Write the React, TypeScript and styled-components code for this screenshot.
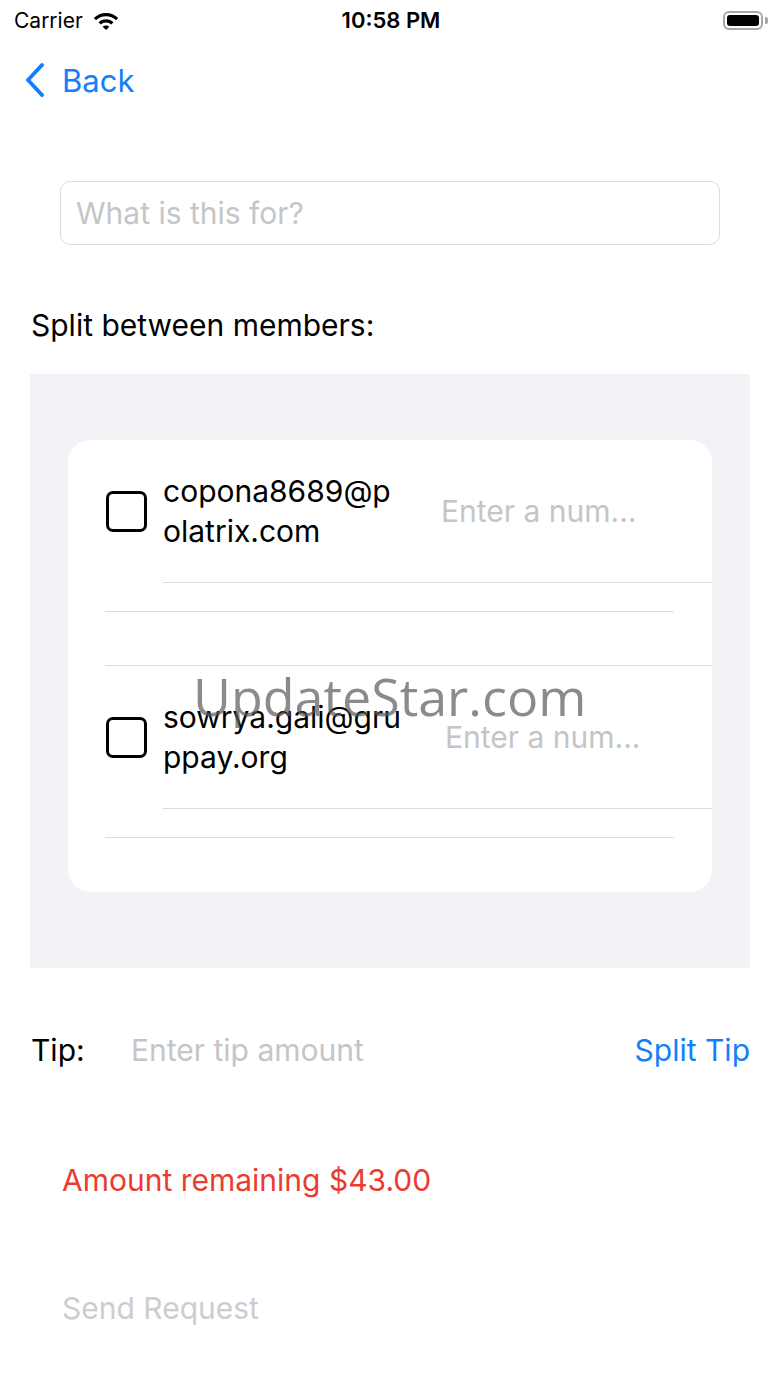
import styled, { createGlobalStyle } from 'styled-components';
import { ReactElement } from 'react';

const GlobalStyle = createGlobalStyle`
  html, body {
    margin: 0;
    padding: 0;
    background: #ffffff;
  }
  body {
    font-family: Inter, 'Liberation Sans', sans-serif;
    color: #000000;
  }
`;

const Screen = styled.div`
  position: relative;
  width: 780px;
  height: 1387px;
  overflow: hidden;
  background: #ffffff;
`;

const StatusBar = styled.div`
  display: grid;
  grid-template-columns: 1fr auto 1fr;
  align-items: center;
  height: 40px;
  padding: 0 12px 0 14px;
  font-size: 21px;
`;

const Carrier = styled.div`
  display: flex;
  align-items: center;
  gap: 9px;
`;

const Clock = styled.div`
  font-weight: 600;
  font-size: 22px;
`;

const Battery = styled.div`
  justify-self: end;
  display: flex;
  align-items: center;
  gap: 2px;
`;

const BatteryBody = styled.div`
  width: 40px;
  height: 19px;
  border: 2px solid #a8a8a8;
  border-radius: 6px;
  padding: 2px;
  box-sizing: border-box;
`;

const BatteryFill = styled.div`
  width: 100%;
  height: 100%;
  background: #000000;
  border-radius: 3px;
`;

const BatteryCap = styled.div`
  width: 3px;
  height: 7px;
  background: #a8a8a8;
  border-radius: 0 2px 2px 0;
`;

const NavBar = styled.div`
  display: flex;
  align-items: center;
  gap: 16px;
  height: 80px;
  padding-left: 24px;
  color: #157efb;
  font-size: 31px;
`;

const Content = styled.div`
  display: flex;
  flex-direction: column;
`;

const TitleField = styled.div`
  margin: 61px 60px 0;
  height: 64px;
  border: 1px solid #dcdcdc;
  border-radius: 10px;
  display: flex;
  align-items: center;
  padding-left: 15px;
  box-sizing: border-box;
`;

const Placeholder = styled.span`
  color: #c5c5c7;
  font-size: 30px;
`;

const SectionLabel = styled.div`
  margin: 60px 31px 0;
  font-size: 30px;
  line-height: 40px;
`;

const GroupedBox = styled.div`
  margin: 29px 30px 0;
  background: #f2f2f7;
  padding: 66px 38px 76px;
`;

const Card = styled.div`
  background: #ffffff;
  border-radius: 22px;
  overflow: hidden;
`;

const MemberRow = styled.div`
  display: flex;
  flex-direction: column;
`;

const Separator = styled.div<{ $inset: number; $trail?: number }>`
  margin: 0 ${(p) => p.$trail ?? 0}px 0 ${(p) => p.$inset}px;
  border-bottom: 1px solid #dcdcdf;
`;

const MemberMain = styled.div`
  display: grid;
  grid-template-columns: 57px 278px 1fr;
  align-items: center;
  padding-left: 38px;
  height: 142px;
`;

const Checkbox = styled.div`
  width: 41px;
  height: 41px;
  border: 3.5px solid #000000;
  border-radius: 7px;
  box-sizing: border-box;
`;

const Email = styled.div`
  font-size: 30px;
  line-height: 40px;
  white-space: nowrap;
`;

const AmountInput = styled.span<{ $offset: number }>`
  color: #c5c5c7;
  font-size: 30px;
  padding-left: ${(p) => p.$offset}px;
`;

const Gap = styled.div<{ $h: number }>`
  height: ${(p) => p.$h}px;
`;

const TipRow = styled.div`
  display: flex;
  align-items: center;
  margin: 62px 30px 0 31px;
  font-size: 30px;
  height: 40px;
`;

const TipLabel = styled.span`
  width: 100px;
`;

const TipPlaceholder = styled.span`
  flex: 1;
  color: #c5c5c7;
`;

const LinkButton = styled.span`
  color: #157efb;
`;

const Remaining = styled.div`
  margin: 90px 62px 0;
  font-size: 30px;
  line-height: 40px;
  color: #eb3b30;
`;

const SendButton = styled.div`
  margin: 88px 62px 0;
  font-size: 30px;
  line-height: 40px;
  color: #cdcdcf;
`;

const Watermark = styled.div`
  position: absolute;
  left: 193px;
  top: 660px;
  font-family: 'Open Sans', sans-serif;
  font-size: 52px;
  color: rgba(90, 90, 90, 0.7);
  pointer-events: none;
`;

function WifiIcon(): ReactElement {
  return (
    <svg width="28" height="21" viewBox="0 0 28 21">
      <path d="M14 3C9.2 3 5 4.9 1.8 8l2.2 2.3C6.6 7.8 10.1 6.3 14 6.3s7.4 1.5 10 4l2.2-2.3C23 4.9 18.8 3 14 3z" fill="#000" />
      <path d="M14 9.3c-2.9 0-5.5 1.1-7.5 3l2.3 2.3c1.4-1.3 3.2-2.1 5.2-2.1s3.8.8 5.2 2.1l2.3-2.3c-2-1.9-4.6-3-7.5-3z" fill="#000" />
      <path d="M14 15.5c-1.3 0-2.5.5-3.3 1.3L14 20.1l3.3-3.3c-.8-.8-2-1.3-3.3-1.3z" fill="#000" />
    </svg>
  );
}

function BackChevron(): ReactElement {
  return (
    <svg width="22" height="36" viewBox="0 0 22 36">
      <path d="M18 3L4 18l14 15" fill="none" stroke="#157efb" strokeWidth="4" strokeLinecap="round" strokeLinejoin="round" />
    </svg>
  );
}

type TMember = { lines: string[]; offset: number };

const members: TMember[] = [
  { lines: ['copona8689@p', 'olatrix.com'], offset: 0 },
  { lines: ['sowrya.gali@gru', 'ppay.org'], offset: 4 },
];

export default function App(): ReactElement {
  return (
    <Screen>
      <GlobalStyle />
      <StatusBar>
        <Carrier>
          Carrier
          <WifiIcon />
        </Carrier>
        <Clock>10:58 PM</Clock>
        <Battery>
          <BatteryBody>
            <BatteryFill />
          </BatteryBody>
          <BatteryCap />
        </Battery>
      </StatusBar>
      <NavBar>
        <BackChevron />
        Back
      </NavBar>
      <Content>
        <TitleField>
          <Placeholder>What is this for?</Placeholder>
        </TitleField>
        <SectionLabel>Split between members:</SectionLabel>
        <GroupedBox>
          <Card>
            {members.map((m, i) => (
              <MemberRow key={m.lines[0]}>
                {i > 0 && <Separator $inset={37} />}
                <MemberMain>
                  <Checkbox />
                  <Email>
                    {m.lines[0]}
                    <br />
                    {m.lines[1]}
                  </Email>
                  <AmountInput $offset={m.offset}>Enter a num...</AmountInput>
                </MemberMain>
                <Separator $inset={95} />
                <Gap $h={28} />
                <Separator $inset={37} $trail={38} />
                <Gap $h={i === members.length - 1 ? 54 : 53} />
              </MemberRow>
            ))}
          </Card>
        </GroupedBox>
        <TipRow>
          <TipLabel>Tip:</TipLabel>
          <TipPlaceholder>Enter tip amount</TipPlaceholder>
          <LinkButton>Split Tip</LinkButton>
        </TipRow>
        <Remaining>Amount remaining $43.00</Remaining>
        <SendButton>Send Request</SendButton>
      </Content>
      <Watermark>UpdateStar.com</Watermark>
    </Screen>
  );
}
